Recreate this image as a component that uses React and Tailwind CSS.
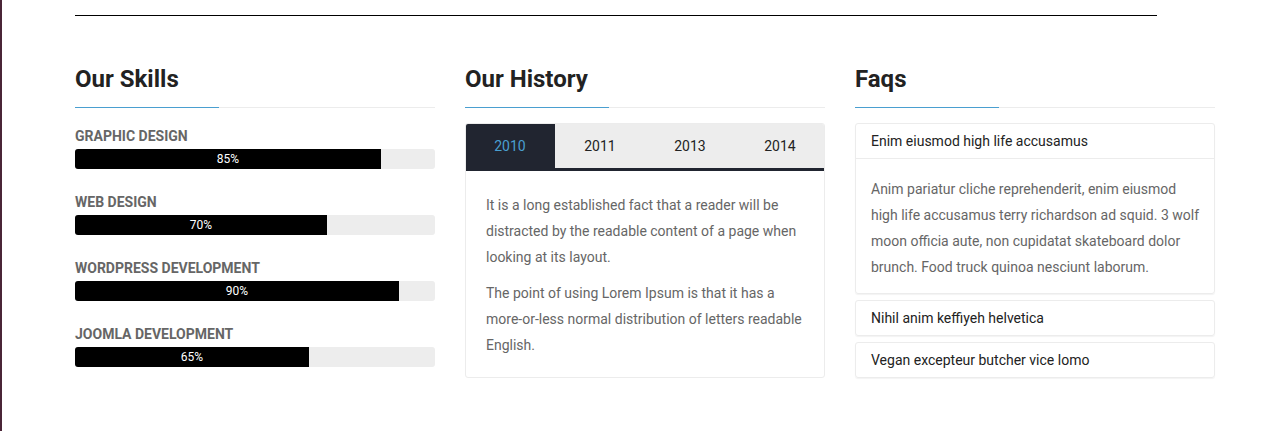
const skills = [
  { name: 'Graphic Design', pct: 85 },
  { name: 'Web Design', pct: 70 },
  { name: 'Wordpress Development', pct: 90 },
  { name: 'Joomla Development', pct: 65 },
];

const years = ['2010', '2011', '2013', '2014'];

const SectionTitle = ({ children }) => (
  <div className="relative border-b border-[#ececec] pb-[13px]">
    <h2 className="text-[24px] leading-[29px] font-bold text-[#222]">{children}</h2>
    <span className="absolute left-0 -bottom-px h-px w-[144px] bg-[#4a9fd0]" />
  </div>
);

export default function App() {
  return (
    <div className="min-h-[431px] border-l-2 border-[#4a2537] bg-white pl-[73px] pt-[15px] font-['Roboto',sans-serif]">
      <div className="h-px w-[1082px] bg-black" />

      <div className="mt-[49px] grid w-[1140px] grid-cols-3 gap-[30px]">
        {/* Skills */}
        <div>
          <SectionTitle>Our Skills</SectionTitle>
          <div className="mt-[19px] flex flex-col gap-[24px]">
            {skills.map((s) => (
              <div key={s.name}>
                <p className="text-[14px] leading-[18px] font-bold uppercase text-[#666]">{s.name}</p>
                <div className="mt-[4px] h-[20px] overflow-hidden rounded-[3px] bg-[#ededed]">
                  <div className="flex h-full items-center justify-center bg-black text-[12px] text-white" style={{ width: `${s.pct}%` }}>
                    {s.pct}%
                  </div>
                </div>
              </div>
            ))}
          </div>
        </div>

        {/* History */}
        <div>
          <SectionTitle>Our History</SectionTitle>
          <div className="mt-[15px] overflow-hidden rounded-[3px] border border-[#ececec]">
            <div className="-mx-px -mt-px flex border-b-[3px] border-[#212530] bg-[#ededed]">
              {years.map((y, i) => (
                <div
                  key={y}
                  className={`flex h-[45px] w-[90px] items-center justify-center pt-[2px] text-[14px] ${i === 0 ? 'bg-[#212530] text-[#4a9fd0]' : 'text-[#222]'}`}
                >
                  {y}
                </div>
              ))}
            </div>
            <div className="px-[20px] pt-[21px] pb-[19px] text-[14px] leading-[26px] text-[#666]">
              <p>It is a long established fact that a reader will be distracted by the readable content of a page when looking at its layout.</p>
              <p className="mt-[10px]">The point of using Lorem Ipsum is that it has a more-or-less normal distribution of letters readable English.</p>
            </div>
          </div>
        </div>

        {/* Faqs */}
        <div>
          <SectionTitle>Faqs</SectionTitle>
          <div className="mt-[15px] flex flex-col gap-[6px]">
            <div className="rounded-[3px] border border-[#ececec] shadow-[0_1px_1px_rgba(0,0,0,0.05)]">
              <div className="flex h-[35px] items-center border-b border-[#ececec] px-[15px] pt-px text-[14px] text-[#222]">
                Enim eiusmod high life accusamus
              </div>
              <p className="px-[15px] pt-[17px] pb-[13px] text-[14px] leading-[26px] text-[#666]">
                Anim pariatur cliche reprehenderit, enim eiusmod high life accusamus terry richardson ad squid. 3 wolf moon officia aute, non cupidatat skateboard dolor brunch. Food truck quinoa nesciunt laborum.
              </p>
            </div>
            <div className="flex h-[36px] items-center rounded-[3px] border border-[#ececec] px-[15px] text-[14px] text-[#222] shadow-[0_1px_1px_rgba(0,0,0,0.05)]">
              Nihil anim keffiyeh helvetica
            </div>
            <div className="flex h-[36px] items-center rounded-[3px] border border-[#ececec] px-[15px] text-[14px] text-[#222] shadow-[0_1px_1px_rgba(0,0,0,0.05)]">
              Vegan excepteur butcher vice lomo
            </div>
          </div>
        </div>
      </div>
    </div>
  );
}
